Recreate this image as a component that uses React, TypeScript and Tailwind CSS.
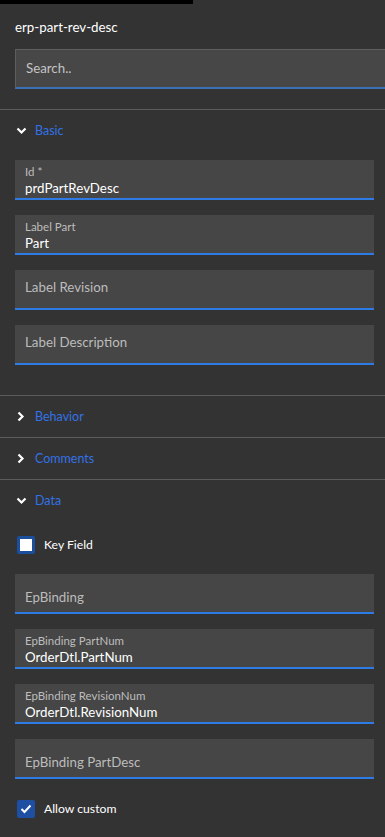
import React from 'react';

const font = { fontFamily: 'Lato, "Open Sans", sans-serif' };

function ChevronDown() {
  return (
    <svg width="11" height="8" viewBox="0 0 11 8" className="block">
      <path d="M1.5 1.5 L5.5 5.5 L9.5 1.5" fill="none" stroke="#fff" strokeWidth="2.2" />
    </svg>
  );
}

function ChevronRight() {
  return (
    <svg width="8" height="11" viewBox="0 0 8 11" className="block">
      <path d="M1.5 1.5 L5.5 5.5 L1.5 9.5" fill="none" stroke="#fff" strokeWidth="2.2" />
    </svg>
  );
}

function SectionHeader({ title, open }: { title: string; open?: boolean }) {
  return (
    <div className="flex h-[41px] items-center pl-[16px]">
      <div className="flex w-[19px] items-center">
        {open ? <ChevronDown /> : <div className="pl-[1px]"><ChevronRight /></div>}
      </div>
      <span className="text-[12.5px] leading-[16px] text-[#3272e6]">{title}</span>
    </div>
  );
}

function Divider() {
  return <div className="h-px bg-[#5c5c5c]" />;
}

function Field({ label, value, low }: { label: string; value?: string; low?: boolean }) {
  return (
    <div className="mr-[11px] ml-[15px] h-[40px] border-b-2 border-[#2f7be6] bg-[#464646] pl-[10px]">
      {value ? (
        <>
          <div className="pt-[5px] text-[11.5px] leading-[14px] text-[#bdbdbd]">{label}</div>
          <div className="text-[13.3px] leading-[18px] text-white">{value}</div>
        </>
      ) : (
        <div
          className={
            low
              ? 'pt-[13px] text-[13.3px] leading-[20px] text-[#bcbcbc]'
              : 'pt-[7px] text-[13.3px] leading-[20px] text-[#bcbcbc]'
          }
        >
          {label}
        </div>
      )}
    </div>
  );
}

function Checkbox({ label, checked }: { label: string; checked?: boolean }) {
  return (
    <div className="flex h-[20px] items-center pl-[17px]">
      {checked ? (
        <div className="flex h-[18px] w-[18px] items-center justify-center rounded-[2px] bg-[#1f4fa3]">
          <svg width="12" height="10" viewBox="0 0 12 10">
            <path d="M1.5 5 L4.5 8 L10.5 1.5" fill="none" stroke="#fff" strokeWidth="2" />
          </svg>
        </div>
      ) : (
        <div className="h-[18px] w-[18px] rounded-[2px] border-[3px] border-[#1c4e9e] bg-white" />
      )}
      <span className="ml-[9px] text-[12.2px] leading-[16px] text-white">{label}</span>
    </div>
  );
}

export default function App() {
  return (
    <div className="min-h-[837px] w-[385px] overflow-hidden bg-[#333333]" style={font}>
      <div className="h-1 w-[193px] bg-black" />
      <div className="mt-[13px] pl-[15px] text-[13.3px] leading-[20px] text-white">erp-part-rev-desc</div>
      <div className="mt-[12px] ml-[15px] h-[40px] w-[375px] border border-b-2 border-[#5e5e5e] border-b-[#3d6fb8] bg-[#474747] pl-[10px] text-[13.3px] leading-[37px] text-[#c4c4c4]">
        Search..
      </div>
      <div className="mt-[20px]">
        <Divider />
      </div>

      <SectionHeader title="Basic" open />
      <div className="mt-[9px] flex flex-col gap-[15px] pb-[30px]">
        <Field label="Id *" value="prdPartRevDesc" />
        <Field label="Label Part" value="Part" />
        <Field label="Label Revision" />
        <Field label="Label Description" />
      </div>
      <Divider />
      <SectionHeader title="Behavior" />
      <Divider />
      <SectionHeader title="Comments" />
      <Divider />
      <SectionHeader title="Data" open />

      <div className="mt-[14px]">
        <Checkbox label="Key Field" />
      </div>
      <div className="mt-[19px] flex flex-col gap-[15px]">
        <Field label="EpBinding" low />
        <Field label="EpBinding PartNum" value="OrderDtl.PartNum" />
        <Field label="EpBinding RevisionNum" value="OrderDtl.RevisionNum" />
        <Field label="EpBinding PartDesc" low />
      </div>
      <div className="mt-[20px]">
        <Checkbox label="Allow custom" checked />
      </div>
    </div>
  );
}
